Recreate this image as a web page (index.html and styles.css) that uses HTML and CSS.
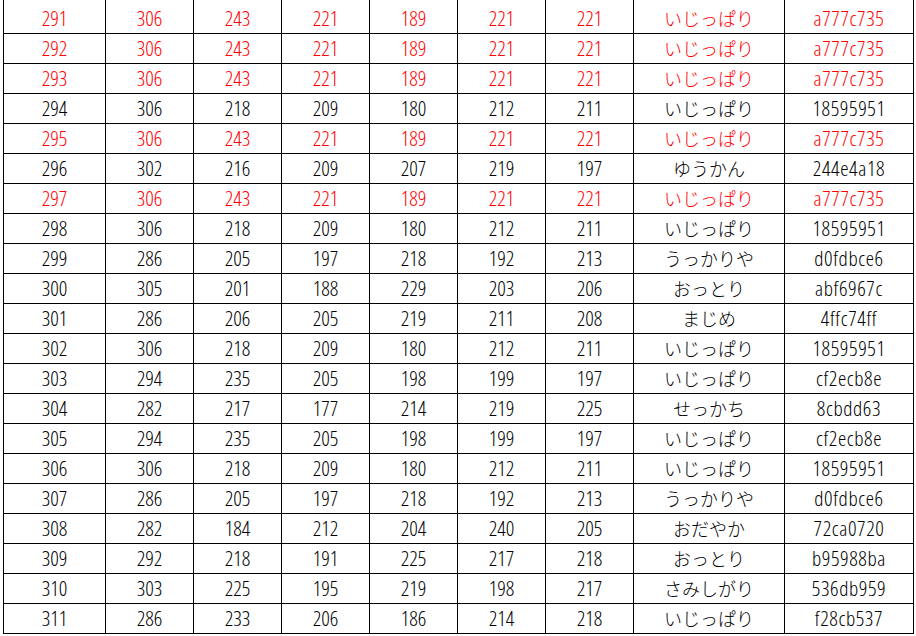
FILE: index.html
```html
<!DOCTYPE html>
<html lang="ja"><head><meta charset="utf-8"><title>table</title><link rel="stylesheet" href="styles.css"></head>
<body>
<div class="table">
<div class="row hl"><div class="c">291</div><div class="c">306</div><div class="c">243</div><div class="c">221</div><div class="c">189</div><div class="c">221</div><div class="c">221</div><div class="c jp">いじっぱり</div><div class="c hex">a777c735</div></div>
<div class="row hl"><div class="c">292</div><div class="c">306</div><div class="c">243</div><div class="c">221</div><div class="c">189</div><div class="c">221</div><div class="c">221</div><div class="c jp">いじっぱり</div><div class="c hex">a777c735</div></div>
<div class="row hl"><div class="c">293</div><div class="c">306</div><div class="c">243</div><div class="c">221</div><div class="c">189</div><div class="c">221</div><div class="c">221</div><div class="c jp">いじっぱり</div><div class="c hex">a777c735</div></div>
<div class="row"><div class="c">294</div><div class="c">306</div><div class="c">218</div><div class="c">209</div><div class="c">180</div><div class="c">212</div><div class="c">211</div><div class="c jp">いじっぱり</div><div class="c hex">18595951</div></div>
<div class="row hl"><div class="c">295</div><div class="c">306</div><div class="c">243</div><div class="c">221</div><div class="c">189</div><div class="c">221</div><div class="c">221</div><div class="c jp">いじっぱり</div><div class="c hex">a777c735</div></div>
<div class="row"><div class="c">296</div><div class="c">302</div><div class="c">216</div><div class="c">209</div><div class="c">207</div><div class="c">219</div><div class="c">197</div><div class="c jp">ゆうかん</div><div class="c hex">244e4a18</div></div>
<div class="row hl"><div class="c">297</div><div class="c">306</div><div class="c">243</div><div class="c">221</div><div class="c">189</div><div class="c">221</div><div class="c">221</div><div class="c jp">いじっぱり</div><div class="c hex">a777c735</div></div>
<div class="row"><div class="c">298</div><div class="c">306</div><div class="c">218</div><div class="c">209</div><div class="c">180</div><div class="c">212</div><div class="c">211</div><div class="c jp">いじっぱり</div><div class="c hex">18595951</div></div>
<div class="row"><div class="c">299</div><div class="c">286</div><div class="c">205</div><div class="c">197</div><div class="c">218</div><div class="c">192</div><div class="c">213</div><div class="c jp">うっかりや</div><div class="c hex">d0fdbce6</div></div>
<div class="row"><div class="c">300</div><div class="c">305</div><div class="c">201</div><div class="c">188</div><div class="c">229</div><div class="c">203</div><div class="c">206</div><div class="c jp">おっとり</div><div class="c hex">abf6967c</div></div>
<div class="row"><div class="c">301</div><div class="c">286</div><div class="c">206</div><div class="c">205</div><div class="c">219</div><div class="c">211</div><div class="c">208</div><div class="c jp">まじめ</div><div class="c hex">4ffc74ff</div></div>
<div class="row"><div class="c">302</div><div class="c">306</div><div class="c">218</div><div class="c">209</div><div class="c">180</div><div class="c">212</div><div class="c">211</div><div class="c jp">いじっぱり</div><div class="c hex">18595951</div></div>
<div class="row"><div class="c">303</div><div class="c">294</div><div class="c">235</div><div class="c">205</div><div class="c">198</div><div class="c">199</div><div class="c">197</div><div class="c jp">いじっぱり</div><div class="c hex">cf2ecb8e</div></div>
<div class="row"><div class="c">304</div><div class="c">282</div><div class="c">217</div><div class="c">177</div><div class="c">214</div><div class="c">219</div><div class="c">225</div><div class="c jp">せっかち</div><div class="c hex">8cbdd63</div></div>
<div class="row"><div class="c">305</div><div class="c">294</div><div class="c">235</div><div class="c">205</div><div class="c">198</div><div class="c">199</div><div class="c">197</div><div class="c jp">いじっぱり</div><div class="c hex">cf2ecb8e</div></div>
<div class="row"><div class="c">306</div><div class="c">306</div><div class="c">218</div><div class="c">209</div><div class="c">180</div><div class="c">212</div><div class="c">211</div><div class="c jp">いじっぱり</div><div class="c hex">18595951</div></div>
<div class="row"><div class="c">307</div><div class="c">286</div><div class="c">205</div><div class="c">197</div><div class="c">218</div><div class="c">192</div><div class="c">213</div><div class="c jp">うっかりや</div><div class="c hex">d0fdbce6</div></div>
<div class="row"><div class="c">308</div><div class="c">282</div><div class="c">184</div><div class="c">212</div><div class="c">204</div><div class="c">240</div><div class="c">205</div><div class="c jp">おだやか</div><div class="c hex">72ca0720</div></div>
<div class="row"><div class="c">309</div><div class="c">292</div><div class="c">218</div><div class="c">191</div><div class="c">225</div><div class="c">217</div><div class="c">218</div><div class="c jp">おっとり</div><div class="c hex">b95988ba</div></div>
<div class="row"><div class="c">310</div><div class="c">303</div><div class="c">225</div><div class="c">195</div><div class="c">219</div><div class="c">198</div><div class="c">217</div><div class="c jp">さみしがり</div><div class="c hex">536db959</div></div>
<div class="row"><div class="c">311</div><div class="c">286</div><div class="c">233</div><div class="c">206</div><div class="c">186</div><div class="c">214</div><div class="c">218</div><div class="c jp">いじっぱり</div><div class="c hex">f28cb537</div></div>
</div>
</body></html>
```
FILE: styles.css
```css
html, body { margin: 0; padding: 0; background: #fff; }
body { overflow: hidden; }
.table { margin-left: 3px; width: 911px; }
.row {
  display: grid;
  grid-template-columns: 102px 88px 88px 88px 88px 88px 88px 151px 129px;
  height: 30px;
  box-sizing: border-box;
  border-left: 1px solid #000;
  border-bottom: 1px solid #000;
  color: #000;
}
.row:first-child { height: 34px; padding-top: 4px; }
.row:first-child .c { margin-top: -4px; padding-top: 4px; }
.row.hl { color: #ff0000; }
.c {
  border-right: 1px solid #000;
  text-align: center;
  line-height: 29px;
  font-family: "Open Sans", "Noto Sans CJK JP", sans-serif;
  font-stretch: 75%;
  font-weight: 350;
  font-size: 21px;
  white-space: nowrap;
  overflow: hidden;
}
.c.jp {
  font-family: "Noto Sans CJK JP", sans-serif;
  font-stretch: normal;
  font-weight: 300;
  font-size: 18px;
}
.c.hex {
  letter-spacing: 0.6px;
}
```
